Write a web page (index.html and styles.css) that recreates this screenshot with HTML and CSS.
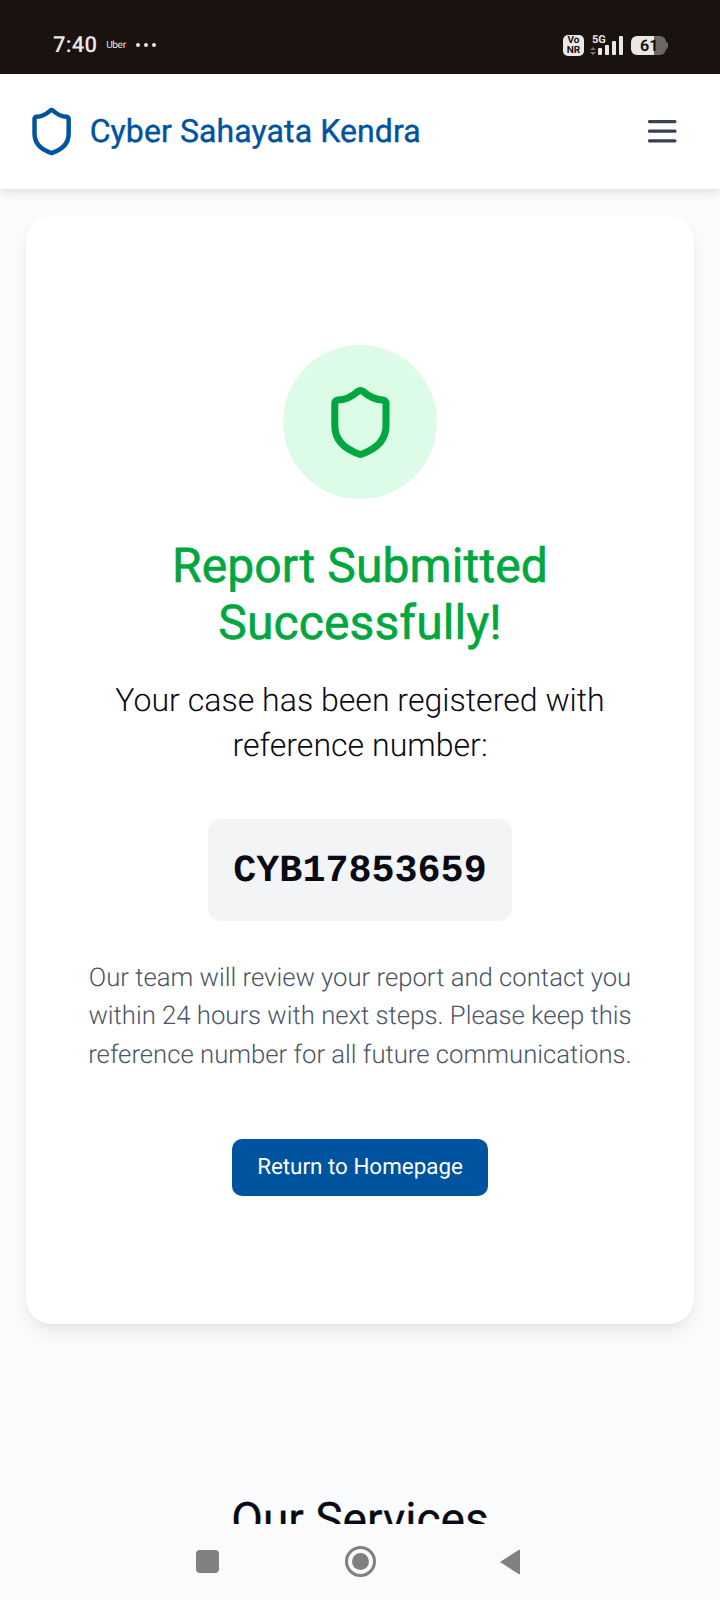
FILE: index.html
```html
<!DOCTYPE html>
<html lang="en">
<head>
<meta charset="utf-8">
<title>Cyber Sahayata Kendra</title>
<link rel="stylesheet" href="styles.css">
</head>
<body>
<div class="status">
  <div class="status-left">
    <span class="time">7:40</span>
    <span class="uber">Uber</span>
    <span class="dots"><i></i><i></i><i></i></span>
  </div>
  <div class="status-right">
    <span class="vonr">Vo<br>NR</span>
    <div class="net">
      <div class="net-type"><span class="fiveg">5G</span>
        <svg class="updown" viewBox="0 0 6 8" width="6" height="8"><path d="M3 0 6 3H0zM3 8 0 5H6z" fill="#77736f"/></svg>
      </div>
      <svg class="bars" viewBox="0 0 25 19" width="25" height="19"><rect x="0" y="12" width="4" height="7" rx="1" fill="#e8e8e6"/><rect x="7" y="9" width="4" height="10" rx="1" fill="#e8e8e6"/><rect x="14" y="5" width="4" height="14" rx="1" fill="#e8e8e6"/><rect x="21" y="0" width="4" height="19" rx="1" fill="#e8e8e6"/></svg>
    </div>
    <div class="battery"><span class="batt-level">61</span><span class="batt-rest"></span><span class="batt-nub"></span></div>
  </div>
</div>
<header class="topbar">
  <div class="brand">
    <svg class="brand-icon" viewBox="0 0 24 24" fill="none" stroke="#00539f" stroke-width="2.100" stroke-linecap="round" stroke-linejoin="round"><path d="M20 13c0 5-3.500 7.500-7.660 8.950a1 1 0 0 1-.670-.010C7.500 20.500 4 18 4 13V6a1 1 0 0 1 1-1c2 0 4.500-1.200 6.240-2.720a1.170 1.170 0 0 1 1.520 0C14.510 3.810 17 5 19 5a1 1 0 0 1 1 1z"/></svg>
    <span class="brand-name">Cyber Sahayata Kendra</span>
  </div>
  <svg class="menu-icon" viewBox="0 0 24 24" fill="none" stroke="#374151" stroke-width="2" stroke-linecap="round"><path d="M4 6h16M4 12h16M4 18h16"/></svg>
</header>
<main class="content">
  <section class="card">
    <div class="success-circle">
      <svg class="success-icon" viewBox="0 0 24 24" fill="none" stroke="#00a63e" stroke-width="2.200" stroke-linecap="round" stroke-linejoin="round"><path d="M20 13c0 5-3.500 7.500-7.660 8.950a1 1 0 0 1-.670-.010C7.500 20.500 4 18 4 13V6a1 1 0 0 1 1-1c2 0 4.500-1.200 6.240-2.720a1.170 1.170 0 0 1 1.520 0C14.510 3.810 17 5 19 5a1 1 0 0 1 1 1z"/></svg>
    </div>
    <h1 class="title">Report Submitted Successfully!</h1>
    <p class="lead">Your case has been registered with reference number:</p>
    <div class="ref">CYB17853659</div>
    <p class="note">Our team will review your report and contact you within 24 hours with next steps. Please keep this reference number for all future communications.</p>
    <a class="button" href="#">Return to Homepage</a>
  </section>
  <h2 class="services">Our Services</h2>
</main>
<nav class="sysnav">
  <span class="nav-square"></span>
  <span class="nav-circle"><i></i></span>
  <svg class="nav-back" viewBox="0 0 22 26" width="22" height="26"><path d="M1 13 20 .8a.6.6 0 0 1 1 .5v23.400a.6.6 0 0 1-1 .5z" fill="#808080"/></svg>
</nav>
</body>
</html>
```
FILE: styles.css
```css
* { box-sizing: border-box; }
html, body { margin: 0; padding: 0; }
body {
  width: 720px;
  height: 1600px;
  overflow: hidden;
  display: flex;
  flex-direction: column;
  background: #fbfcfd;
  font-family: Roboto, sans-serif;
  color: #0a0a14;
  text-rendering: geometricPrecision;
}
.status {
  flex: none;
  height: 74px;
  background: #1a120e;
  display: flex;
  justify-content: space-between;
  align-items: center;
  padding: 16px 52px 0 53px;
  color: #e8e8e6;
}
.status-left { display: flex; align-items: center; }
.time { font-size: 22px; font-weight: 500; letter-spacing: .2px; }
.uber { font-size: 10px; margin-left: 9px; letter-spacing: -.3px; }
.dots { display: flex; gap: 3.500px; margin-left: 10px; }
.dots i { width: 4.500px; height: 4.500px; border-radius: 50%; background: #e8e8e6; }
.status-right { display: flex; align-items: center; }
.vonr {
  width: 21px; height: 21px;
  border-radius: 5px;
  background: #e8e8e6;
  color: #1a120e;
  font-size: 10px;
  font-weight: 700;
  line-height: 10px;
  text-align: center;
  padding-top: 1px;
}
.net { display: flex; align-items: flex-end; margin-left: 8px; }
.net-type { display: flex; flex-direction: column; width: 12px; margin-right: -6px; }
.fiveg { font-size: 11px; font-weight: 700; line-height: 10px; white-space: nowrap; }
.updown { display: block; margin: 2px 0 0 -2px; }
.bars { display: block; }
.battery { display: flex; align-items: center; margin-left: 8px; height: 19px; }
.batt-level {
  position: relative;
  z-index: 1;
  width: 23px; height: 19px;
  background: #e8e8e6;
  border-radius: 6px 0 0 6px;
  color: #1a120e;
  font-size: 16px;
  font-weight: 700;
  line-height: 19px;
  padding-left: 9px;
  white-space: nowrap;
}
.batt-rest { width: 12px; height: 19px; background: #6b6864; border-radius: 0 6px 6px 0; }
.batt-nub { width: 2px; height: 7px; background: #6b6864; border-radius: 0 2px 2px 0; }
.topbar {
  flex: none;
  position: relative;
  z-index: 2;
  height: 115px;
  background: #fff;
  display: flex;
  justify-content: space-between;
  align-items: center;
  padding: 0 39px 0 26px;
  box-shadow: 0 6px 10px rgba(0,0,0,.07), 0 2px 4px rgba(0,0,0,.04);
}
.brand { display: flex; align-items: center; gap: 12.500px; }
.brand-icon { width: 51.200px; height: 51.200px; display: block; }
.brand-name {
  font-size: 32px;
  font-weight: 400;
  -webkit-text-stroke: .4px #00539f;
  letter-spacing: .1px;
  color: #00539f;
  line-height: 46px;
  margin-top: -1px;
}
.menu-icon { width: 38.400px; height: 38.400px; display: block; }
.content {
  flex: 1;
  min-height: 0;
  overflow: hidden;
  padding: 27px 26px 0;
}
.card {
  height: 1108px;
  background: #fff;
  border-radius: 25.600px;
  box-shadow: 0 10px 24px -5px rgba(0,0,0,.1), 0 4px 10px -4px rgba(0,0,0,.06);
  padding: 129px 32px 0;
  display: flex;
  flex-direction: column;
  align-items: center;
  text-align: center;
}
.success-circle {
  width: 153.600px; height: 153.600px;
  border-radius: 50%;
  background: #dcfce7;
  display: flex;
  align-items: center;
  justify-content: center;
}
.success-icon { width: 76.800px; height: 76.800px; display: block; margin-top: 1px; }
.title {
  margin: 38px 0 0;
  width: 440px;
  font-size: 48px;
  line-height: 57.600px;
  font-weight: 400;
  -webkit-text-stroke: .6px #00a63e;
  letter-spacing: .13px;
  color: #00a63e;
}
.lead {
  margin: 26px 0 0;
  width: 540px;
  font-size: 32.100px;
  line-height: 45px;
  font-weight: 300;
}
.ref {
  margin-top: 51px;
  padding: 27px 25.600px 24.200px;
  background: #f3f4f6;
  border-radius: 12.800px;
  font-family: "Liberation Mono", monospace;
  font-size: 38.400px;
  line-height: 51px;
  font-weight: 700;
}
.note {
  margin: 38px 0 0;
  width: 560px;
  font-size: 25.700px;
  line-height: 38.400px;
  font-weight: 300;
  color: #4a5565;
}
.button {
  margin-top: 65px;
  width: 256px;
  height: 57px;
  padding-bottom: 1px;
  display: flex;
  align-items: center;
  justify-content: center;
  background: #00539f;
  color: #fff;
  border-radius: 10px;
  font-size: 22.400px;
  text-decoration: none;
}
.services {
  margin: 168px 0 0;
  text-align: center;
  font-size: 46px;
  line-height: 57.600px;
  font-weight: 400;
  -webkit-text-stroke: .3px #0a0a14;
}
.sysnav {
  flex: none;
  height: 76px;
  background: #fbfbfb;
  display: flex;
  align-items: center;
  padding: 0 0 10px 196px;
  position: relative;
  z-index: 3;
}
.nav-square { width: 23px; height: 23px; border-radius: 4px; background: #808080; margin-top: 9px; }
.nav-circle {
  width: 31px; height: 31px;
  margin: 9px 0 0 126px;
  border: 3px solid #808080;
  border-radius: 50%;
  display: flex;
  align-items: center;
  justify-content: center;
}
.nav-circle i { width: 17px; height: 17px; border-radius: 50%; background: #808080; }
.nav-back { margin: 9px 0 0 123px; display: block; }
```
